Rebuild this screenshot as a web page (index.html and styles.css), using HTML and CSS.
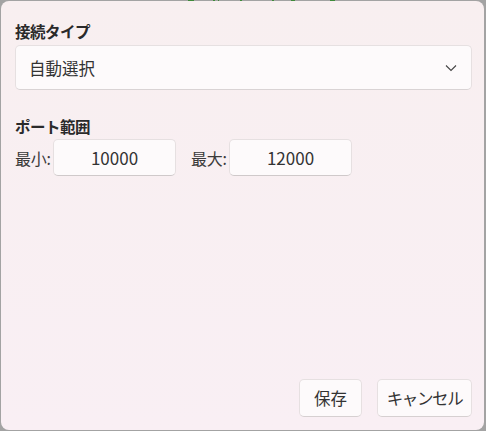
FILE: index.html
```html
<!DOCTYPE html>
<html lang="ja">
<head>
<meta charset="utf-8">
<link rel="stylesheet" href="styles.css">
</head>
<body>
<div class="backdrop">
  <span class="g g1"></span><span class="g g2"></span><span class="g g3"></span><span class="g g4"></span><span class="g g5"></span><span class="g g6"></span><span class="g g7"></span>
</div>
<div class="dialog">
  <div class="content">
    <div class="section">
      <div class="label">接続タイプ</div>
      <div class="combo">
        <span class="combo-text">自動選択</span>
        <svg class="chev" width="12" height="8" viewBox="0 0 12 8"><path d="M1 1.5 L6 6.5 L11 1.5" fill="none" stroke="#444" stroke-width="1.1"/></svg>
      </div>
    </div>
    <div class="section port">
      <div class="label">ポート範囲</div>
      <div class="range">
        <span class="rlabel">最小:</span>
        <div class="num">10000</div>
        <span class="rlabel second">最大:</span>
        <div class="num">12000</div>
      </div>
    </div>
  </div>
  <div class="footer">
    <button class="btn save">保存</button>
    <button class="btn cancel">キャンセル</button>
  </div>
</div>
</body>
</html>
```
FILE: styles.css
```css
html, body {
  margin: 0;
  padding: 0;
}
body {
  width: 486px;
  height: 431px;
  background: #a3a3a3;
  font-family: "Noto Sans CJK JP", "Noto Sans", sans-serif;
  color: #2b2b2b;
  position: relative;
  overflow: hidden;
}
.backdrop {
  position: absolute;
  left: 0;
  top: 0;
  width: 486px;
  height: 1px;
}
.g {
  position: absolute;
  top: 0;
  height: 1px;
  background: #3f8a3a;
}
.g1 { left: 188px; width: 6px; }
.g2 { left: 213px; width: 2px; }
.g3 { left: 218px; width: 1px; }
.g4 { left: 240px; width: 2px; }
.g5 { left: 272px; width: 2px; }
.g6 { left: 291px; width: 4px; }
.g7 { left: 330px; width: 5px; }
.dialog {
  position: absolute;
  left: 1px;
  top: 1px;
  width: 483px;
  height: 429px;
  border-radius: 8px;
  background: linear-gradient(#f8eff0, #f9eff4);
  display: flex;
  flex-direction: column;
  justify-content: space-between;
  box-sizing: border-box;
}
.content {
  padding: 18px 12px 0 14px;
  display: flex;
  flex-direction: column;
}
.label {
  font-size: 15.5px;
  font-weight: bold;
  line-height: 24px;
  color: #2a2a2a;
  letter-spacing: -0.5px;
}
.combo {
  margin-top: 2px;
  height: 45px;
  box-sizing: border-box;
  background: #fdfafb;
  border: 1px solid #e6e0e1;
  border-bottom-color: #d9d3d4;
  border-radius: 5px;
  display: flex;
  align-items: center;
  justify-content: space-between;
  padding: 0 14px 0 13px;
}
.combo-text {
  font-size: 16.5px;
  color: #333;
}
.chev {
  display: block;
}
.port {
  margin-top: 24px;
}
.range {
  display: flex;
  align-items: center;
  margin-top: 1px;
}
.rlabel {
  font-size: 16px;
  color: #3a3a3a;
  width: 38px;
  letter-spacing: -0.3px;
}
.rlabel.second {
  margin-left: 15px;
}
.num {
  width: 123px;
  height: 37px;
  box-sizing: border-box;
  background: #fdfafb;
  border: 1px solid #e6e0e1;
  border-bottom-color: #cfc9ca;
  border-radius: 5px;
  display: flex;
  align-items: center;
  justify-content: center;
  font-size: 17px;
  color: #333;
}
.footer {
  display: flex;
  justify-content: flex-end;
  gap: 15px;
  padding: 0 12px 13px 0;
}
.btn {
  font-family: "Noto Sans CJK JP", "Noto Sans", sans-serif;
  height: 38px;
  box-sizing: border-box;
  background: #fdfafb;
  border: 1px solid #e6e0e1;
  border-bottom-color: #d6d0d1;
  border-radius: 5px;
  font-size: 16.5px;
  color: #333;
  padding: 0;
}
.save { width: 63px; }
.cancel { width: 95px; letter-spacing: -1.4px; }
```
